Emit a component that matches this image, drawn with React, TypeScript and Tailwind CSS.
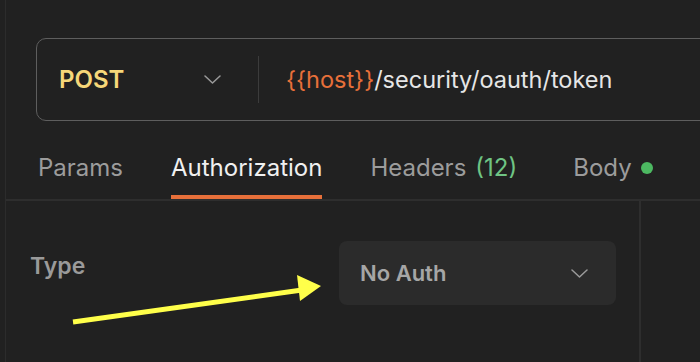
import React from 'react';

const tabs = [
  { label: 'Params' },
  { label: 'Authorization', active: true },
  { label: 'Headers', count: '(12)' },
  { label: 'Body', dot: true },
];

function Chevron({ className }: { className?: string }) {
  return (
    <svg viewBox="0 0 17 9" className={className} fill="none" stroke="currentColor" strokeWidth="1.5" strokeLinecap="round" strokeLinejoin="round">
      <path d="M1 1l7.5 7L16 1" />
    </svg>
  );
}

export default function App() {
  return (
    <div className="relative flex w-[700px] h-[362px] overflow-hidden bg-[#212121] font-['Inter',sans-serif]">
      <div className="w-[5px] shrink-0" />
      <div className="flex flex-1 flex-col border-l border-[#2c2c2c] min-w-0">
        {/* request bar */}
        <div className="pl-[30px] pt-[38px]">
          <div className="flex h-[83px] w-[720px] items-center rounded-[10px] border-[1.5px] border-[#5e5e5e]">
            <div className="flex w-[221px] items-center justify-between pl-[22px] pr-[37px]">
              <span className="text-[24px] font-semibold text-[#f6d779]">POST</span>
              <Chevron className="w-[17px] h-[9px] text-[#9a9a9a]" />
            </div>
            <div className="h-[47px] w-px bg-[#3c3c3c]" />
            <div className="pl-[27px] text-[23.5px] text-[#e6e6e6]">
              <span className="text-[#e8703a]">{'{{host}}'}</span>/security/oauth/token
            </div>
          </div>
        </div>

        {/* tabs */}
        <div className="mt-[33px] flex h-[47px] items-start gap-[48px] border-b-2 border-[#2e2e2e] pl-[32px]">
          {tabs.map((t) => (
            <div
              key={t.label}
              className={`flex h-full items-start gap-[9px] pt-[2px] text-[24px] leading-[24px] ${
                t.active ? 'border-b-[4px] border-[#e8703a] text-[#f0f0f0]' : 'text-[#9c9c9c]'
              } ${t.dot ? 'ml-[8px]' : ''}`}
            >
              <span>{t.label}</span>
              {t.count && <span className="text-[#6fc484]">{t.count}</span>}
              {t.dot && <span className="mt-[6px] h-[12px] w-[12px] rounded-full bg-[#4cb861]" />}
            </div>
          ))}
        </div>

        {/* auth body */}
        <div className="flex flex-1">
          <div className="flex w-[635px] items-start border-r-2 border-[#2e2e2e] pl-[24px] pt-[40px]">
            <div className="w-[309px] pt-[14px] text-[23px] leading-[23px] font-semibold text-[#9a9a9a]">Type</div>
            <div className="flex h-[64px] w-[277px] items-center justify-between rounded-[8px] bg-[#2b2b2b] pl-[21px] pr-[28px]">
              <span className="text-[22px] font-semibold text-[#a6a6a6]">No Auth</span>
              <Chevron className="w-[17px] h-[9px] text-[#9a9a9a]" />
            </div>
          </div>
        </div>
      </div>

      {/* annotation arrow */}
      <svg className="absolute left-0 top-0 pointer-events-none" width="700" height="362">
        <line x1="73" y1="322" x2="302" y2="290" stroke="#ffff4a" strokeWidth="5" />
        <polygon points="321,286 297,275 300,301" fill="#ffff4a" />
      </svg>
    </div>
  );
}
